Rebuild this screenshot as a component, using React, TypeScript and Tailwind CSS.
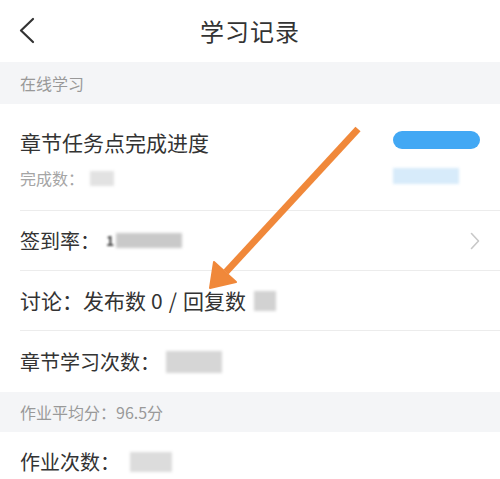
import React from "react";

const font = { fontFamily: '"Noto Sans CJK SC", "Noto Sans", sans-serif' };

function Blur({ className }: { className: string }) {
  return <span className={`inline-block blur-[1.5px] ${className}`} />;
}

export default function App() {
  return (
    <div className="relative w-[500px] h-[479px] overflow-hidden bg-white" style={font}>
      {/* Header */}
      <div className="relative flex h-[62px] items-center justify-center">
        <svg className="absolute left-[18px] top-[17px]" width="18" height="27" viewBox="0 0 18 27">
          <path d="M15 2 L3 13.5 L15 25" fill="none" stroke="#333" strokeWidth="2.2" strokeLinecap="round" strokeLinejoin="round" />
        </svg>
        <span className="text-[24px] tracking-[1px] text-[#333] leading-none">学习记录</span>
      </div>

      {/* Section: 在线学习 */}
      <div className="flex h-[42px] items-center bg-[#f4f5f7] px-5 text-[16px] text-[#999]">在线学习</div>

      {/* Row 1 */}
      <div className="ml-5 flex h-[107px] border-b border-[#ececec] pr-5">
        <div className="flex flex-1 flex-col pt-[24px]">
          <span className="text-[21px] leading-[28px] text-[#333]">章节任务点完成进度</span>
          <div className="mt-[10px] flex items-center text-[16px] text-[#a5a5a5]">
            <span>完成数：</span>
            <Blur className="ml-[6px] h-[15px] w-[24px] bg-[#e2e2e2]" />
          </div>
        </div>
        <div className="flex flex-col items-start pt-[27px]">
          <span className="h-[18px] w-[87px] rounded-full bg-[#42a8f4]" />
          <Blur className="mt-[19px] h-[16px] w-[66px] bg-[#d7ebfa]" />
        </div>
      </div>

      {/* Row 2 */}
      <div className="ml-5 flex h-[60px] items-center border-b border-[#ececec] pr-5">
        <span className="text-[20px] text-[#333]">签到率：</span>
        <span className="ml-[6px] text-[14px] font-bold text-[#444] blur-[1px]">1</span>
        <Blur className="ml-[2px] h-[15px] w-[66px] bg-[#c9c9c9]" />
        <span className="flex-1" />
        <svg width="10" height="18" viewBox="0 0 10 18">
          <path d="M1.5 1.5 L8.5 9 L1.5 16.5" fill="none" stroke="#c8c8c8" strokeWidth="1.6" strokeLinecap="round" strokeLinejoin="round" />
        </svg>
      </div>

      {/* Row 3 */}
      <div className="ml-5 flex h-[60px] items-center border-b border-[#ececec] pr-5 text-[21px] text-[#333]">
        <span>讨论：发布数</span>
        <span className="ml-[5px]">0</span>
        <span className="ml-[6px]">/</span>
        <span className="ml-[6px]">回复数</span>
        <Blur className="ml-[8px] h-[20px] w-[22px] bg-[#d2d2d2]" />
      </div>

      {/* Row 4 */}
      <div className="ml-5 flex h-[61px] items-center pr-5">
        <span className="text-[20px] text-[#333]">章节学习次数：</span>
        <Blur className="ml-[6px] h-[22px] w-[56px] bg-[#d6d6d6]" />
      </div>

      {/* Section: 作业平均分 */}
      <div className="flex h-[40px] items-center bg-[#f4f5f7] px-5 text-[16px] text-[#999]">作业平均分：96.5分</div>

      {/* Row 5 */}
      <div className="ml-5 flex h-[60px] items-center pr-5">
        <span className="text-[20px] text-[#333]">作业次数：</span>
        <Blur className="ml-[10px] h-[20px] w-[42px] bg-[#dcdcdc]" />
      </div>

      {/* Annotation arrow */}
      <svg className="pointer-events-none absolute left-0 top-0" width="500" height="479" viewBox="0 0 500 479">
        <line x1="358" y1="129" x2="226" y2="272" stroke="#f0883a" strokeWidth="7" />
        <polygon points="210,288 214,262 236,282" fill="#f0883a" stroke="#f0883a" strokeWidth="2" strokeLinejoin="round" />
      </svg>
    </div>
  );
}
